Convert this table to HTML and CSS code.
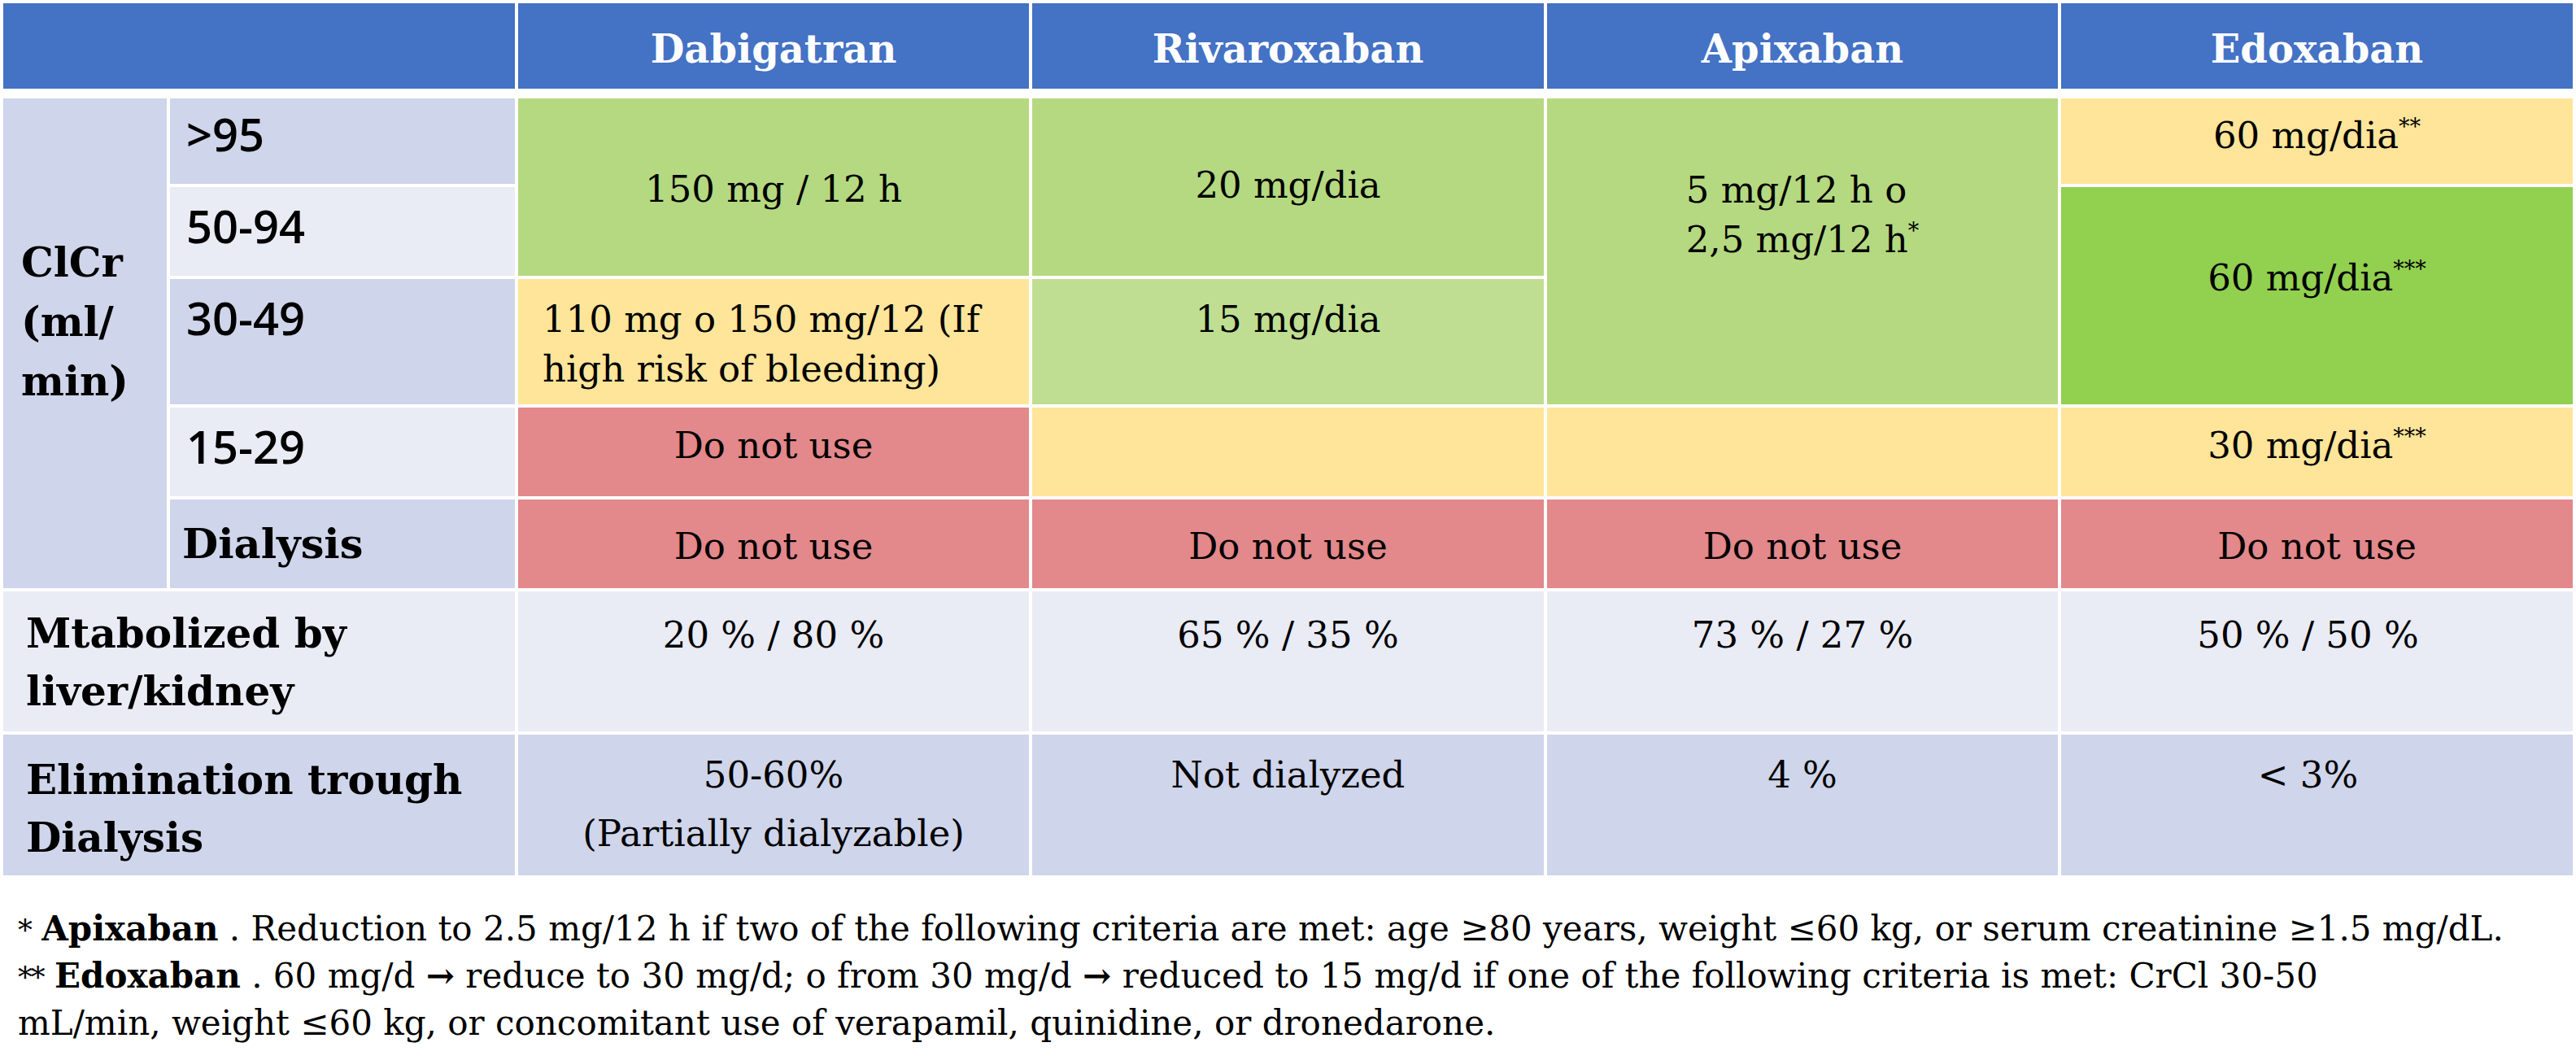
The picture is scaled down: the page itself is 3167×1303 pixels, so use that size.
FILE: index.html
```html
<!DOCTYPE html>
<html lang="en">
<head>
<meta charset="utf-8">
<title>DOAC dosing by renal function</title>
<link rel="stylesheet" href="styles.css">
</head>
<body>
<div class="page">
  <div class="head grid-cols">
    <div class="h-blank"></div>
    <div class="h">Dabigatran</div>
    <div class="h">Rivaroxaban</div>
    <div class="h">Apixaban</div>
    <div class="h">Edoxaban</div>
  </div>

  <div class="body grid-cols">
    <!-- row >95 -->
    <div class="clcr lav">ClCr<br>(ml/<br>min)</div>
    <div class="rng lav rng-first">&gt;95</div>
    <div class="c green span2 pt-dab">150 mg / 12 h</div>
    <div class="c green span2 pt-riv">20 mg/dia</div>
    <div class="c green span3 pt-api"><span class="lines">5 mg/12 h o<br>2,5 mg/12 h<sup>*</sup></span></div>
    <div class="c yellow pt-edo1">60 mg/dia<sup>**</sup></div>

    <!-- row 50-94 -->
    <div class="rng lav-l">50-94</div>
    <div class="c edo-green span2 pt-edo2">60 mg/dia<sup>***</sup></div>

    <!-- row 30-49 -->
    <div class="rng lav">30-49</div>
    <div class="c yellow left pt-19">110 mg o 150 mg/12 (If<br>high risk of bleeding)</div>
    <div class="c green-l pt-19">15 mg/dia</div>

    <!-- row 15-29 -->
    <div class="rng lav-l">15-29</div>
    <div class="c red pt-16">Do not use</div>
    <div class="c yellow"></div>
    <div class="c yellow"></div>
    <div class="c yellow pt-16">30 mg/dia<sup>***</sup></div>

    <!-- row dialysis -->
    <div class="lbl lav pt-dial">Dialysis</div>
    <div class="c red pt-27">Do not use</div>
    <div class="c red pt-27">Do not use</div>
    <div class="c red pt-27">Do not use</div>
    <div class="c red pt-27">Do not use</div>

    <!-- row metabolized -->
    <div class="lbl wide lav-l pt-met">Mtabolized by<br>liver/kidney</div>
    <div class="c lav-l pt-23">20 % / 80 %</div>
    <div class="c lav-l pt-23">65 % / 35 %</div>
    <div class="c lav-l pt-23">73 % / 27 %</div>
    <div class="c lav-l pt-23 shift-l">50 % / 50 %</div>

    <!-- row elimination -->
    <div class="lbl wide lav pt-elim">Elimination trough<br>Dialysis</div>
    <div class="c lav tall pt-elimv">50-60%<br>(Partially dialyzable)</div>
    <div class="c lav tall pt-elimv">Not dialyzed</div>
    <div class="c lav tall pt-elimv">4 %</div>
    <div class="c lav tall pt-elimv shift-l">&lt; 3%</div>
  </div>

  <div class="notes">
    <p class="note"><span class="ast">*</span> <b>Apixaban</b> . Reduction to 2.5 mg/12 h if two of the following criteria are met: age ≥80 years, weight ≤60 kg, or serum creatinine ≥1.5 mg/dL.</p>
    <p class="note"><span class="ast">**</span> <b>Edoxaban</b> . 60 mg/d <span class="arr">→</span> reduce to 30 mg/d; o from 30 mg/d <span class="arr">→</span> reduced to 15 mg/d if one of the following criteria is met: CrCl 30-50</p>
    <p class="note">mL/min, weight ≤60 kg, or concomitant use of verapamil, quinidine, or dronedarone.</p>
  </div>
</div>
</body>
</html>
```

FILE: styles.css
```css
html, body {
  margin: 0;
  padding: 0;
  background: #ffffff;
}

.page {
  padding: 4px 4px 0 4px;
  width: 3159px;
  font-family: "DejaVu Serif", "Liberation Serif", serif;
  color: #000;
}

.grid-cols {
  display: grid;
  grid-template-columns: 201px 424px 628px 629px 628px 629px;
  column-gap: 4px;
}

/* header */
.head {
  grid-template-rows: 105px;
  margin-bottom: 12px;
}
.h-blank {
  grid-column: span 2;
  background: #4472C4;
}
.h {
  background: #4472C4;
  color: #fff;
  font-weight: bold;
  font-size: 48px;
  line-height: 60px;
  text-align: center;
  padding-top: 26px;
  box-sizing: border-box;
}

/* body */
.body {
  grid-template-rows: 105px 109px 154px 109px 109px 172px 173px;
  row-gap: 4px;
}

.lav { background: #CFD5EA; }
.lav-l { background: #E9EBF5; }
.green { background: #B5D980; }
.green-l { background: #BFDE92; }
.edo-green { background: #92D050; }
.yellow { background: #FFE599; }
.red { background: #E3888B; }

.span2 { grid-row: span 2; }
.span3 { grid-row: span 3; }
.wide { grid-column: span 2; }

.clcr {
  grid-row: span 5;
  font-weight: bold;
  font-size: 50px;
  line-height: 73px;
  padding: 165px 0 0 22px;
  box-sizing: border-box;
}

.rng {
  font-family: "Open Sans", "Noto Sans", sans-serif;
  font-weight: 600;
  font-size: 56px;
  line-height: 70px;
  padding: 12px 0 0 20px;
  box-sizing: border-box;
}
.rng-first { padding-top: 8px; }

.lbl {
  font-weight: bold;
  font-size: 51px;
  line-height: 60px;
  padding-left: 15px;
  box-sizing: border-box;
}
.lbl.wide {
  font-size: 50px;
  padding-left: 28px;
  line-height: 71px;
}
.pt-dial { padding-top: 24px; }
.pt-met { padding-top: 16px; }
.pt-elim { padding-top: 20px; }

.c {
  font-size: 45px;
  line-height: 61px;
  text-align: center;
  box-sizing: border-box;
}
.c.left {
  text-align: left;
  padding-left: 30px;
}
.c.tall { line-height: 72px; }
.shift-l { padding-right: 22px; }

.lines {
  display: inline-block;
  text-align: left;
}

.pt-dab { padding-top: 81px; }
.pt-riv { padding-top: 76px; }
.pt-api { padding-top: 82px; }
.pt-edo1 { padding-top: 15px; }
.pt-edo2 { padding-top: 81px; }
.pt-19 { padding-top: 19px; }
.pt-16 { padding-top: 16px; }
.pt-27 { padding-top: 27px; }
.pt-23 { padding-top: 23px; }
.pt-elimv { padding-top: 14px; }

sup {
  font-size: 0.6em;
  line-height: 0;
  vertical-align: 0.62em;
}

/* notes */
.notes {
  margin-top: 38px;
  padding-left: 18px;
}
.note {
  margin: 0;
  font-size: 42px;
  line-height: 56px;
  white-space: nowrap;
}
.note b { font-weight: bold; }
.ast {
  font-size: 0.85em;
  letter-spacing: -2px;
}
.arr { font-weight: bold; }
```
